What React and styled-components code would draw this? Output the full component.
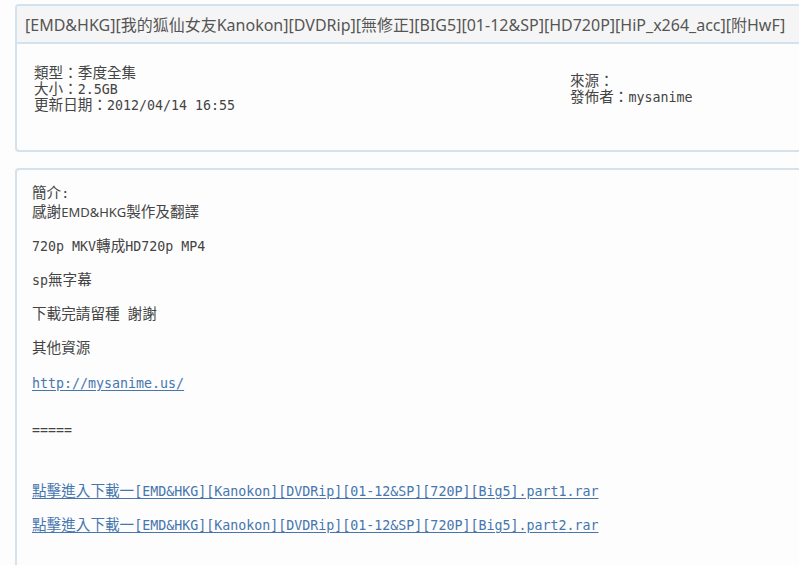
import React from "react";
import styled, { createGlobalStyle } from "styled-components";

const Global = createGlobalStyle`
  html, body { margin: 0; padding: 0; background: #fdfdfd; overflow: hidden; }
  body { font-family: "Noto Sans CJK TC", "Noto Sans", sans-serif; }
`;

const Page = styled.div`
  padding: 4px 0 0 15px;
  width: 830px;
  display: flex;
  flex-direction: column;
  gap: 16px;
`;

const Panel = styled.section`
  border: 2px solid #d2e3ef;
  border-radius: 4px;
  background: #fdfdfd;
  overflow: hidden;
`;

const Heading = styled.div`
  background: #f5f5f5;
  border-bottom: 2px solid #d2e3ef;
  height: 36px;
  padding: 0 8px;
  display: flex;
  align-items: center;
  font-family: "Noto Sans", "Noto Sans CJK TC", sans-serif;
  font-size: 16px;
  color: #555;
  white-space: nowrap;
`;

const InfoBody = styled.div`
  display: grid;
  grid-template-columns: 536px 1fr;
  align-items: center;
  padding: 20px 0 38px 17px;
`;

const InfoCol = styled.div`
  display: flex;
  flex-direction: column;
  font-family: "DejaVu Sans Mono", "Noto Sans CJK TC", monospace;
  font-size: 13.3px;
  color: #444;
`;

const InfoRow = styled.div`
  height: 16px;
  line-height: 16px;
  white-space: nowrap;
`;

const Desc = styled.div`
  padding: 14px 15px 40px 15px;
  font-family: "DejaVu Sans Mono", "Noto Sans CJK TC", monospace;
  font-size: 13.3px;
  color: #444;
`;

const Han = styled.span`
  font-family: "Noto Sans CJK TC", sans-serif;
  font-size: 14.6px;
  line-height: 16px;
`;

const Line = styled.div`
  height: 17px;
  line-height: 17px;
  white-space: pre;
  margin-bottom: ${(p) => p.$gap ?? 17}px;
`;

const Sans = styled.span`
  font-family: "Noto Sans", "Noto Sans CJK TC", sans-serif;
  font-size: 13px;
`;

const Link = styled.a`
  color: #4676ad;
  text-decoration: underline;
  text-underline-offset: 2px;
`;

export default function App() {
  const part = (n) => (
    <Link href="#">
      <Han>點擊進入下載一</Han>[EMD&amp;HKG][Kanokon][DVDRip][01-12&amp;SP][720P][Big5].part{n}.rar
    </Link>
  );
  return (
    <>
      <Global />
      <Page>
        <Panel>
          <Heading>
            [EMD&amp;HKG][我的狐仙女友Kanokon][DVDRip][無修正][BIG5][01-12&amp;SP][HD720P][HiP_x264_acc][附HwF]
          </Heading>
          <InfoBody>
            <InfoCol>
              <InfoRow><Han>類型：季度全集</Han></InfoRow>
              <InfoRow><Han>大小：</Han>2.5GB</InfoRow>
              <InfoRow><Han>更新日期：</Han>2012/04/14 16:55</InfoRow>
            </InfoCol>
            <InfoCol>
              <InfoRow><Han>來源：</Han></InfoRow>
              <InfoRow><Han>發佈者：</Han>mysanime</InfoRow>
            </InfoCol>
          </InfoBody>
        </Panel>
        <Panel>
          <Desc>
            <Line $gap={2}><Han>簡介</Han>:</Line>
            <Line>
              <Han>感謝</Han><Sans>EMD&amp;HKG</Sans><Han>製作及翻譯</Han>
            </Line>
            <Line>720p MKV<Han>轉成</Han>HD720p MP4</Line>
            <Line>sp<Han>無字幕</Han></Line>
            <Line><Han>下載完請留種</Han>{" "}<Han>謝謝</Han></Line>
            <Line $gap={19}><Han>其他資源</Han></Line>
            <Line $gap={30}>
              <Link href="#">http://mysanime.us/</Link>
            </Line>
            <Line $gap={43}>=====</Line>
            <Line>{part(1)}</Line>
            <Line>{part(2)}</Line>
          </Desc>
        </Panel>
      </Page>
    </>
  );
}
